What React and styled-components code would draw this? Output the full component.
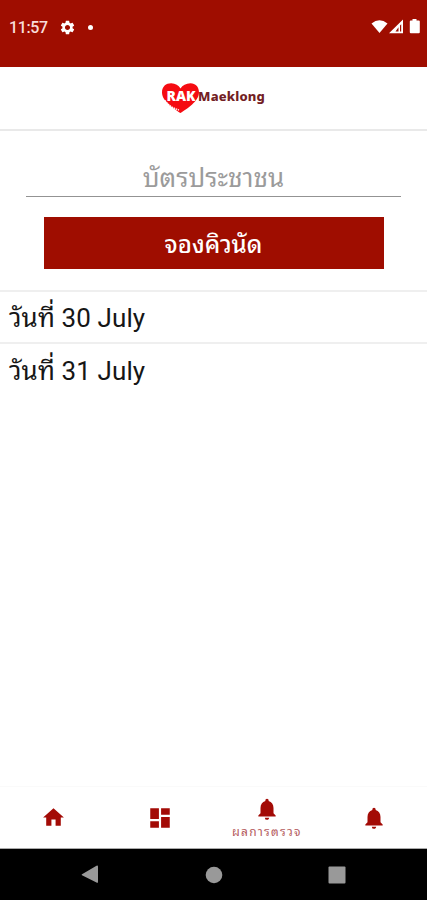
import { useState } from 'react';
import styled, { createGlobalStyle } from 'styled-components';
import { MdDashboard, MdHome, MdNotifications, MdSettings } from 'react-icons/md';

const dates = ['30 July', '31 July'];

const tabs = [
  { id: 'home', icon: MdHome, size: 25 },
  { id: 'menu', icon: MdDashboard, size: 26 },
  { id: 'result', icon: MdNotifications, size: 26, label: 'ผลการตรวจ' },
  { id: 'notice', icon: MdNotifications, size: 26 },
];

const App = () => {
  const [idCard, setIdCard] = useState('');

  return (
    <Screen>
      <GlobalStyle />
      <StatusBar>
        <Clock>11:57</Clock>
        <MdSettings size={17} />
        <Dot />
        <Signals width="50" height="16" viewBox="0 0 50 16">
          <path d="M0.5 4.4Q8.5-1.8 16.5 4.4L8.5 14z" />
          <path d="M18 14.2L32 0.5v13.7zM24.5 12.4h3V8.3zM29 12.4h1.2V5.2L29 6.6z" fillRule="evenodd" />
          <path d="M41.5 0h4v1.4h2.3q1 0 1 1v10.8q0 1-1 1h-8q-1 0-1-1V2.4q0-1 1-1h1.7z" />
        </Signals>
      </StatusBar>

      <Header>
        <Logo>
          <Heart width="38" height="31" viewBox="0 0 38 31">
            <path
              d="M18.5 30C14 27 0 19 0 9.5C0 3.5 4 .3 9.2 .3C13.5 .3 16.5 2.5 18.5 5.5C20.5 2.5 24 .3 28.5 .3C33.5 .3 37 4 37 9.5C37 18 25 26 18.5 30z"
              fill="#f50c12"
            />
            <path d="M3 17.5Q8 24.5 17 27" fill="none" stroke="#fff" strokeWidth="1.3" strokeDasharray="1.6 .7" />
            <text x="4.5" y="18" textLength="29" lengthAdjust="spacingAndGlyphs">
              RAK
            </text>
          </Heart>
          <LogoText>Maeklong</LogoText>
        </Logo>
      </Header>

      <Booking>
        <IdInput placeholder="บัตรประชาชน" value={idCard} onChange={(e) => setIdCard(e.target.value)} />
        <BookButton>จองคิวนัด</BookButton>
      </Booking>

      <DateList>
        {dates.map((date) => (
          <DateRow key={date}>วันที่ {date}</DateRow>
        ))}
      </DateList>

      <TabBar>
        {tabs.map(({ id, icon: Icon, size, label }) => (
          <Tab key={id}>
            <Icon size={size} />
            {label && <TabLabel>{label}</TabLabel>}
          </Tab>
        ))}
      </TabBar>

      <SystemNav>
        <svg width="18" height="20" viewBox="0 0 18 20">
          <path d="M1 9.2L15.5 .8Q17 0 17 1.8V16.6Q17 18.5 15.5 17.6L1 10.2Q.2 9.7 1 9.2z" />
        </svg>
        <svg width="18" height="18" viewBox="0 0 18 18">
          <circle cx="9" cy="9" r="8.3" />
        </svg>
        <svg width="18" height="18" viewBox="0 0 18 18">
          <rect x=".5" y=".5" width="17" height="17" rx="1" />
        </svg>
      </SystemNav>
    </Screen>
  );
};

const GlobalStyle = createGlobalStyle`
  * {
    box-sizing: border-box;
  }

  body {
    margin: 0;
    font-family: Roboto, 'Noto Sans Thai Looped', Loma, Waree, 'Noto Sans', sans-serif;
  }
`;

const Screen = styled.div`
  display: flex;
  flex-direction: column;
  width: 427px;
  height: 900px;
  overflow: hidden;
  background-color: #fff;
`;

const StatusBar = styled.div`
  display: flex;
  align-items: center;
  height: 67px;
  padding: 0 6px 13px 9px;
  background-color: #9f0d00;
  color: #fff;
`;

const Clock = styled.span`
  width: 50px;
  font-size: 16px;
  font-weight: 500;
  letter-spacing: -0.4px;
  color: #f8dcd9;
`;

const Dot = styled.span`
  width: 5px;
  height: 5px;
  margin-left: 12px;
  border-radius: 50%;
  background-color: #fff;
`;

const Signals = styled.svg`
  margin-left: auto;
  fill: #fff;
`;

const Header = styled.header`
  display: flex;
  justify-content: center;
  height: 64px;
  padding-top: 16px;
  border-bottom: 2px solid #e9e9e9;
`;

const Logo = styled.div`
  display: flex;
  align-items: flex-start;
`;

const Heart = styled.svg`
  text {
    fill: #fff;
    font-family: 'Open Sans', sans-serif;
    font-size: 14px;
    font-weight: 800;
  }
`;

const LogoText = styled.span`
  margin: 4px 0 0 -2px;
  font-family: 'Noto Sans', sans-serif;
  font-size: 13px;
  font-weight: 800;
  line-height: 18px;
  letter-spacing: 0.15px;
  color: #722024;
`;

const Booking = styled.section`
  display: flex;
  flex-direction: column;
  align-items: center;
  height: 161px;
  padding-top: 29px;
  border-bottom: 2px solid #efefef;
`;

const IdInput = styled.input`
  width: 375px;
  height: 37px;
  padding: 0;
  border: none;
  border-bottom: 1px solid #939393;
  outline: none;
  background: none;
  font-family: inherit;
  font-size: 26px;
  text-align: center;

  &::placeholder {
    color: #9b9b9b;
  }
`;

const BookButton = styled.button`
  width: 340px;
  height: 52px;
  margin-top: 20px;
  padding: 0 0 3px;
  border: none;
  background-color: #9f0d00;
  font-family: inherit;
  font-size: 24px;
  font-weight: 500;
  color: #fff;
`;

const DateList = styled.div`
  flex: 1;
`;

const DateRow = styled.div`
  height: 50px;
  padding-left: 9px;
  font-size: 26px;
  line-height: 52px;
  letter-spacing: 0.1px;
  color: #161616;

  & + & {
    height: 54px;
    border-top: 2px solid #efefef;
    line-height: 54px;
  }
`;

const TabBar = styled.nav`
  display: grid;
  grid-template-columns: repeat(4, 1fr);
  height: 63px;
  border-top: 1px solid #fafafa;
  border-bottom: 1px solid #aaa;
`;

const Tab = styled.div`
  display: flex;
  flex-direction: column;
  align-items: center;
  justify-content: center;
  color: #a30b06;
`;

const TabLabel = styled.span`
  padding-top: 2px;
  font-size: 12px;
  line-height: 16px;
  letter-spacing: 1.3px;
  color: #b45a5d;
`;

const SystemNav = styled.div`
  display: flex;
  align-items: center;
  justify-content: space-between;
  height: 51px;
  padding: 0 81px;
  background-color: #000;

  svg {
    fill: #999;
  }
`;

export default App;
